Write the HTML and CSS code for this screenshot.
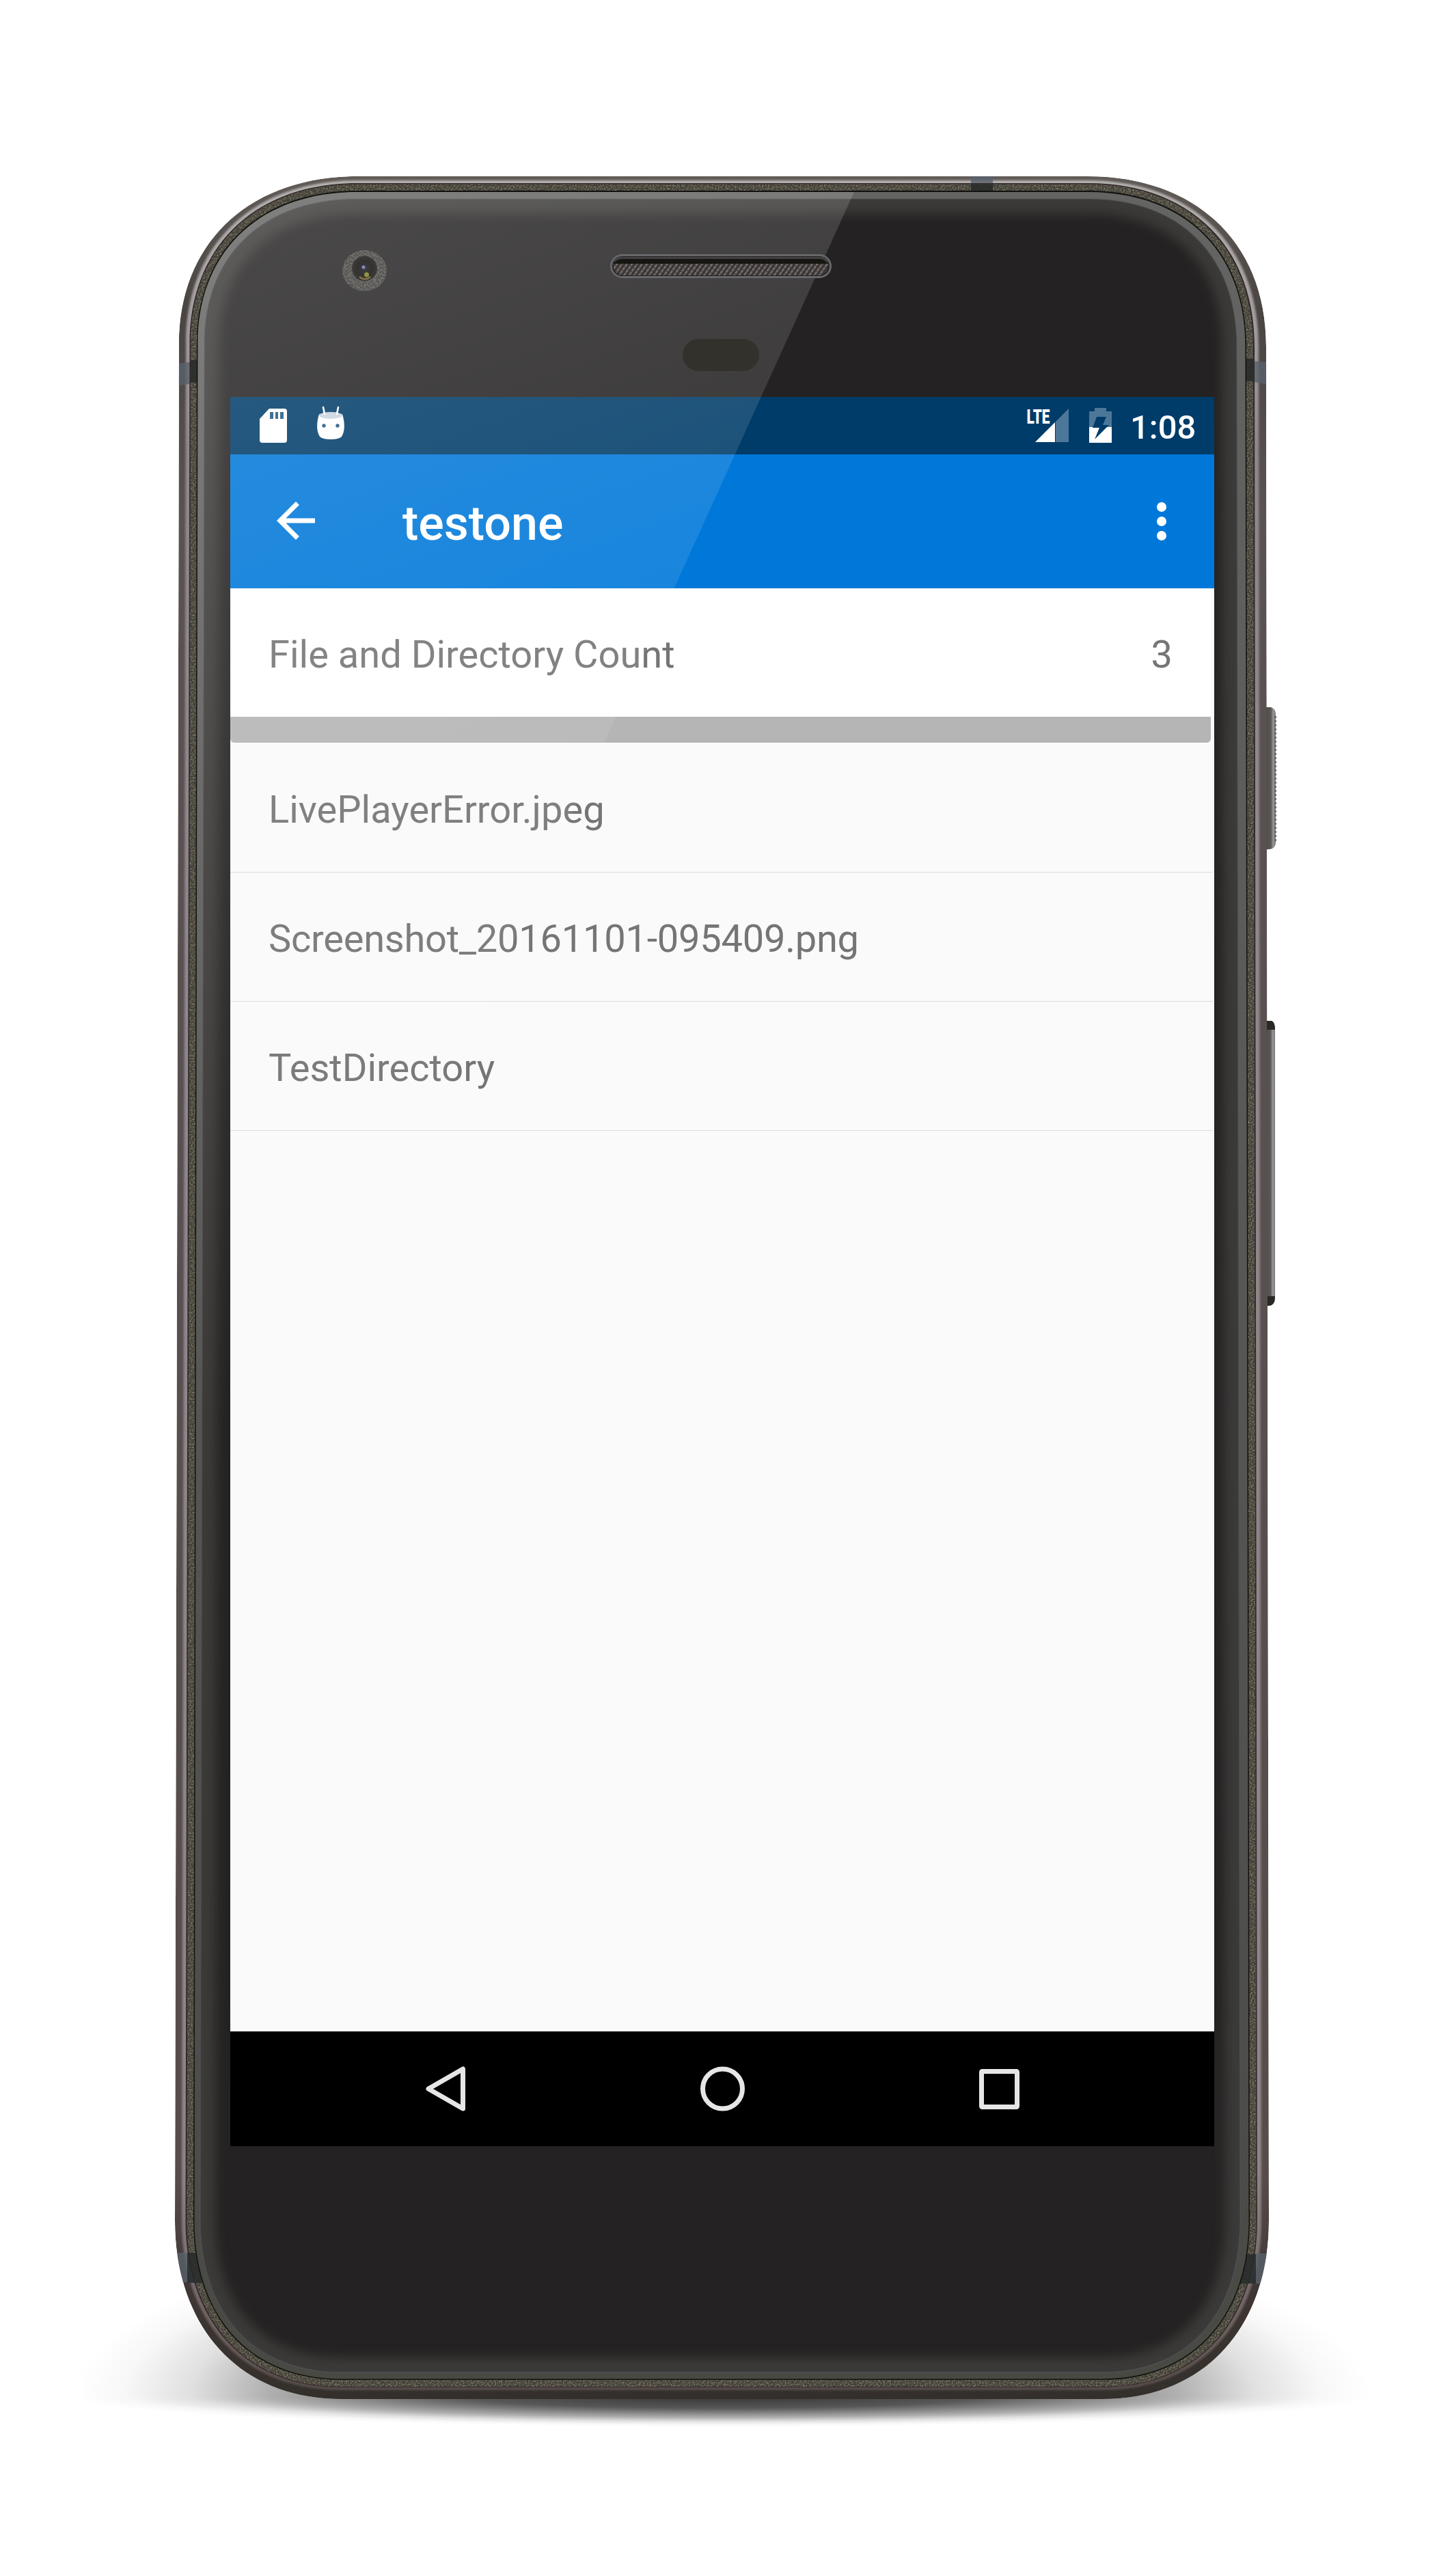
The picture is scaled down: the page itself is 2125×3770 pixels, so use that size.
FILE: index.html
```html
<!DOCTYPE html>
<html lang="en">
<head>
<meta charset="utf-8">
<title>testone</title>
<link rel="stylesheet" href="styles.css">
</head>
<body>
<div class="stage">
  <svg class="device" viewBox="0 0 2125 3770" aria-hidden="true">
    <defs>
      <radialGradient id="ground">
        <stop offset="0" stop-opacity=".8"/><stop offset=".4" stop-opacity=".66"/>
        <stop offset=".7" stop-opacity=".31"/><stop offset=".82" stop-opacity=".12"/><stop offset=".92" stop-opacity=".03"/><stop offset="1" stop-opacity="0"/>
      </radialGradient>
      <linearGradient id="metal" x1="0" y1="0" x2="0" y2="1">
        <stop offset="0" stop-color="#625c59"/><stop offset=".06" stop-color="#4a4442"/>
        <stop offset=".15" stop-color="#5a5252"/><stop offset=".9" stop-color="#564c4c"/><stop offset=".95" stop-color="#3f3735"/><stop offset="1" stop-color="#332f2a"/>
      </linearGradient>
      <linearGradient id="highlight" x1="0" y1="0" x2="0" y2="1">
        <stop offset="0" stop-color="#b5b2b0"/><stop offset=".12" stop-color="#8f898e"/>
        <stop offset=".9" stop-color="#8f8588"/><stop offset=".97" stop-color="#6d6260"/><stop offset="1" stop-color="#564b49"/>
      </linearGradient>
      <linearGradient id="rim" x1="0" y1="0" x2="0" y2="1">
        <stop offset="0" stop-color="#646462"/><stop offset=".5" stop-color="#575856"/><stop offset="1" stop-color="#494944"/>
      </linearGradient>
      <linearGradient id="button" x1="0" x2="1">
        <stop offset="0" stop-color="#474644"/><stop offset=".6" stop-color="#5b5b55"/><stop offset=".78" stop-color="#9a949b"/><stop offset="1" stop-color="#77727a"/>
      </linearGradient>
      <filter id="soft" color-interpolation-filters="sRGB" x="-5%" y="-5%" width="110%" height="110%"><feGaussianBlur stdDeviation="8"/></filter>
      <filter id="edge" color-interpolation-filters="sRGB" x="-5%" y="-5%" width="110%" height="110%"><feGaussianBlur stdDeviation="1.5"/></filter>
      <filter id="grain" color-interpolation-filters="sRGB" x="0" y="0" width="100%" height="100%">
        <feTurbulence type="fractalNoise" baseFrequency=".45" numOctaves="2" result="n"/>
        <feColorMatrix in="n" values="0 0 0 0 .6  0 0 0 0 .58  0 0 0 0 .5  1.8 0 0 0 -.7"/>
        <feComposite in2="SourceGraphic" operator="in" result="g"/>
        <feMerge><feMergeNode in="SourceGraphic"/><feMergeNode in="g"/></feMerge>
      </filter>
      <clipPath id="body-clip"><path d="M262 503C262 355 365 258 523 258H1592C1750 258 1853 355 1853 507L1857 3250C1857 3400 1768 3511 1613 3511H500C345 3511 256 3400 256 3250Z"/></clipPath>
      <clipPath id="glass-clip"><path d="M299 503C299 373 385 291 523 291H1592C1726 291 1810 373 1810 507L1815 3250C1815 3379 1745 3472 1613 3472H500C365 3472 293 3379 293 3250Z"/></clipPath>
      <clipPath id="lower"><rect x="0" y="3506" width="2125" height="200"/></clipPath>
      <clipPath id="upper"><rect x="0" y="3100" width="2125" height="406"/></clipPath>
    </defs>
    <ellipse cx="1057" cy="3506" rx="950" ry="260" fill="url(#ground)" clip-path="url(#upper)"/>
    <ellipse cx="1057" cy="3506" rx="950" ry="46" fill="url(#ground)" clip-path="url(#lower)"/>
    <path d="M1850 1035H1860Q1867 1037 1867 1046V1232Q1867 1243 1856 1243H1850Z" fill="url(#button)"/>
    <path d="M1866.5 1048V1232" stroke="#6b666a" stroke-width="3" stroke-dasharray="3 3"/>
    <path d="M1850 1494H1861Q1866 1496 1866 1506V1900Q1866 1911 1856 1911H1850Z" fill="url(#button)"/>
    <path d="M1850 1494H1861Q1866 1496 1866 1507H1850ZM1850 1897H1866Q1866 1911 1856 1911H1850Z" fill="#292824"/>
    <g clip-path="url(#body-clip)">
      <path d="M262 503C262 355 365 258 523 258H1592C1750 258 1853 355 1853 507L1857 3250C1857 3400 1768 3511 1613 3511H500C345 3511 256 3400 256 3250Z" fill="url(#metal)"/>
      <path filter="url(#edge)" d="M272 503C272 359 370 264 523 264H1592C1744 264 1842 359 1842 507L1846 3250C1846 3393 1762 3498 1613 3498H500C350 3498 266 3393 266 3250Z" fill="url(#highlight)"/>
      <g fill="#59626c" opacity=".8">
        <path d="M250 534L290 528V560L250 566ZM1815 527L1865 531V564L1815 556ZM250 3297H300V3340H250ZM1800 3298H1870V3342H1800ZM1421 250H1453V300H1421Z"/>
      </g>
      <path d="M277.500 503C277.500 360.500 373.500 268 523 268H1592C1741 268 1836 360.500 1836 507L1840 3250C1840 3391 1759 3494 1613 3494H500C353.500 3494 271.500 3391 271.500 3250Z" fill="#33272a"/>
      <path filter="url(#grain)" d="M279 503C279 361.300 374.300 269.500 523 269.500H1592C1739.500 269.500 1834 361.300 1834 507L1838.500 3250C1838.500 3390 1758 3493 1613 3493H500C354.300 3493 273.500 3390 273.500 3250Z" fill="#3f3d35"/>
      <g fill="#272a29" opacity=".85">
        <path d="M279 527H290V560H279ZM1820 525H1834V558H1820ZM274 3297H300V3341H274ZM1800 3299H1838V3342H1800ZM1421 269.500H1453V290H1421Z"/>
      </g>
      <path d="M288 503C288 366.500 379.300 279 523 279H1592C1734 279 1824 366.500 1824 507L1829 3250C1829 3384.600 1752 3483 1613 3483H500C359.300 3483 283 3384.600 283 3250Z" fill="#11110e"/>
      <path d="M289.500 503C289.500 367.700 380.400 281 523 281H1592C1733 281 1822.500 367.700 1822.500 507L1827.500 3250C1827.500 3384 1751 3481.500 1613 3481.500H500C360.400 3481.500 284.500 3384 284.500 3250Z" fill="url(#rim)"/>
    </g>
    <g clip-path="url(#glass-clip)">
      <path d="M280 270H1840V3490H270Z" fill="#242222"/>
      <path filter="url(#soft)" d="M299 503C299 373 385 291 523 291H1592C1726 291 1810 373 1810 507L1815 3250C1815 3379 1745 3472 1613 3472H500C365 3472 293 3379 293 3250Z" fill="none" stroke="#3b3a38" stroke-width="44"/>
    </g>
    <path d="M299 503C299 373 385 291 523 291H1592C1726 291 1810 373 1810 507L1815 3250C1815 3379 1745 3472 1613 3472H500C365 3472 293 3379 293 3250Z" fill="none" stroke="#595961" stroke-width="1.500" opacity=".6"/>
  </svg>

  <main class="screen">
    <header class="status">
      <svg class="status-card" viewBox="0 0 125 84">
        <path fill="#fff" d="M57 17H79Q83 17 83 21V63Q83 67 79 67H47Q43 67 43 63V32Z"/>
        <path fill="#23587f" d="M58 22h5v10h-5zM66 22h4v10h-4zM73 22h5v10h-5z"/>
      </svg>
      <svg class="status-bot" viewBox="0 0 44 84">
        <path fill="#fff" d="M5 25Q22 32 39 25C43 38 43 50 38 58Q34 62 22 62Q10 62 6 58C1 50 1 38 5 25Z"/>
        <ellipse cx="22" cy="27" rx="17" ry="5" fill="#c8d4e0"/>
        <path d="M11 15L13 25M33 15L31 25" stroke="#fff" stroke-width="2.600" stroke-linecap="round"/>
        <circle cx="12" cy="42" r="2.700" fill="#23587f"/><circle cx="32" cy="42" r="2.700" fill="#23587f"/>
      </svg>
      <span class="grow"></span>
      <svg class="status-signal" viewBox="0 0 66 84">
        <text class="lte" x="1.500" y="39" textLength="34" lengthAdjust="spacingAndGlyphs">LTE</text>
        <path fill="#4d7798" d="M44 36L63 17V66H44Z"/>
        <path fill="#fff" d="M43 37V66H14Z"/>
      </svg>
      <svg class="status-battery" viewBox="0 0 34 84">
        <path fill="#4d7798" d="M0 21H8V16H25V21H33V45H0Z"/>
        <path fill="#fff" d="M0 44H33V67H0Z"/>
        <path fill="#003c69" d="M11 29H25L20 41H29L8 62L15 45H5Z"/>
      </svg>
      <span class="clock">1:08</span>
    </header>
    <div class="appbar">
      <svg class="icon back" viewBox="0 0 24 24"><path fill="#fff" d="M20 11H7.830l5.590-5.590L12 4l-8 8 8 8 1.410-1.410L7.830 13H20v-2z"/></svg>
      <h1 class="title">testone</h1>
      <svg class="icon" viewBox="0 0 24 24"><g fill="#fff"><circle cx="12" cy="6" r="2"/><circle cx="12" cy="12" r="2"/><circle cx="12" cy="18" r="2"/></g></svg>
    </div>
    <section class="card">
      <div class="count"><span>File and Directory Count</span><span>3</span></div>
      <div class="strip"></div>
    </section>
    <ul class="list">
      <li>LivePlayerError.jpeg</li>
      <li class="tight">Screenshot_20161101-095409.png</li>
      <li>TestDirectory</li>
    </ul>
    <nav class="nav">
      <svg viewBox="0 0 84 84"><path d="M67.500 13V71L17 42Z"/></svg>
      <svg viewBox="0 0 84 84"><circle cx="42.500" cy="42" r="29"/></svg>
      <svg viewBox="0 0 84 84"><rect x="16.500" y="16.500" width="52" height="52" rx="1"/></svg>
    </nav>
  </main>

  <svg class="device gloss" viewBox="0 0 2125 3770" aria-hidden="true">
    <defs>
      <linearGradient id="shine" gradientUnits="userSpaceOnUse" x1="290" y1="285" x2="868" y2="1883">
        <stop offset="0" stop-color="#fff" stop-opacity=".18"/><stop offset="1" stop-color="#fff" stop-opacity="0"/>
      </linearGradient>
      <clipPath id="rim-clip"><path d="M289.500 503C289.500 367.700 380.400 281 523 281H1592C1733 281 1822.500 367.700 1822.500 507L1827.500 3250H284.500Z"/></clipPath>
      <pattern id="mesh" width="6" height="6" patternUnits="userSpaceOnUse" patternTransform="rotate(35)">
        <rect width="6" height="6" fill="#3a3635"/><rect width="2.500" height="5" fill="#77706f"/>
      </pattern>
      <radialGradient id="lens"><stop offset="0" stop-color="#3f3d45"/><stop offset=".6" stop-color="#33322f"/><stop offset="1" stop-color="#3c3b39"/></radialGradient>
    </defs>
    <path clip-path="url(#rim-clip)" d="M280 281H1250L284 2408Z" fill="url(#shine)"/>
    <rect x="894.500" y="373.500" width="321" height="32" rx="16" fill="#232222" stroke="#68686c" stroke-width="3"/>
    <rect x="899" y="376" width="312" height="12" rx="6" fill="#414143"/>
    <path d="M897 390Q899 379 912 379H1200Q1210 380 1213 390Z" fill="#171611"/>
    <path d="M897 386H1213Q1211 403 1198 403H911Q898 402 897 386Z" fill="url(#mesh)"/>
    <rect x="999" y="496" width="112" height="47" rx="23.500" fill="#32312c"/>
    <ellipse cx="533.500" cy="396" rx="32.500" ry="30" fill="#555557" filter="url(#grain)"/>
    <circle cx="533.500" cy="393" r="18.500" fill="url(#lens)"/>
    <circle cx="532" cy="391" r="2.500" fill="#8a8ac0"/>
    <circle cx="536.500" cy="402" r="3.500" fill="#929443"/>
    <path d="M526 405Q534 412 542 405" stroke="#7e704b" stroke-width="2.500" fill="none"/>
  </svg>
</div>
</body>
</html>
```
FILE: styles.css
```css
* {
  box-sizing: border-box;
}

body {
  margin: 0;
  background: #fff;
  font-family: Roboto, "Liberation Sans", sans-serif;
}

.stage {
  position: relative;
  width: 2125px;
  height: 3770px;
  padding: 581px 348px 0 337px;
  overflow: hidden;
}

.device {
  position: absolute;
  top: 0;
  left: 0;
  width: 2125px;
  height: 3770px;
}

.gloss {
  pointer-events: none;
}

.screen {
  position: relative;
  display: flex;
  flex-direction: column;
  width: 1440px;
  height: 2560px;
  background: #fafafa;
}

.status {
  display: flex;
  height: 84px;
  background: #003c69;
  color: #fff;
}

.status svg {
  height: 84px;
  flex: none;
}

.status-card {
  width: 125px;
}

.status-bot {
  width: 44px;
}

.grow {
  flex: 1;
}

.status-signal {
  width: 66px;
  margin-right: 27px;
}

.status-battery {
  width: 34px;
  margin-right: 26px;
}

.lte {
  font-size: 29px;
  font-weight: 900;
  fill: #fff;
}

.clock {
  width: 123px;
  padding-top: 3px;
  font-size: 49px;
  font-weight: 500;
  line-height: 84px;
}

.appbar {
  display: flex;
  align-items: center;
  height: 196px;
  padding: 0 35px 0 54px;
  background: #0078d9;
  color: #fff;
}

.icon {
  width: 84px;
  height: 84px;
}

.back {
  margin-top: -3px;
}

.title {
  flex: 1;
  margin: 0;
  padding: 6px 0 0 114px;
  font-size: 70px;
  font-weight: 500;
  line-height: 82px;
}

.card {
  width: 1435px;
  border-bottom: 1px solid #fff;
}

.count {
  display: flex;
  justify-content: space-between;
  height: 188px;
  padding: 6px 56px 0;
  border-radius: 6px 6px 0 0;
  background: #fff;
  color: #757575;
  font-size: 56px;
  line-height: 182px;
}

.strip {
  height: 38px;
  border-radius: 0 0 6px 6px;
  background: #b5b5b5;
}

.list {
  flex: 1;
  margin: 0;
  padding: 0;
  list-style: none;
}

.list li {
  width: 1438px;
  height: 189px;
  padding: 6px 56px 0;
  border-bottom: 1px solid #dcdcdc;
  color: #757575;
  font-size: 56px;
  line-height: 182px;
}

.list .tight {
  letter-spacing: -0.25px;
}

.nav {
  display: flex;
  justify-content: space-between;
  align-items: center;
  height: 168px;
  padding: 0 273px;
  background: #000;
}

.nav svg {
  width: 84px;
  height: 84px;
  fill: none;
  stroke: #e6e6e6;
  stroke-width: 7;
  stroke-linejoin: round;
}
```
